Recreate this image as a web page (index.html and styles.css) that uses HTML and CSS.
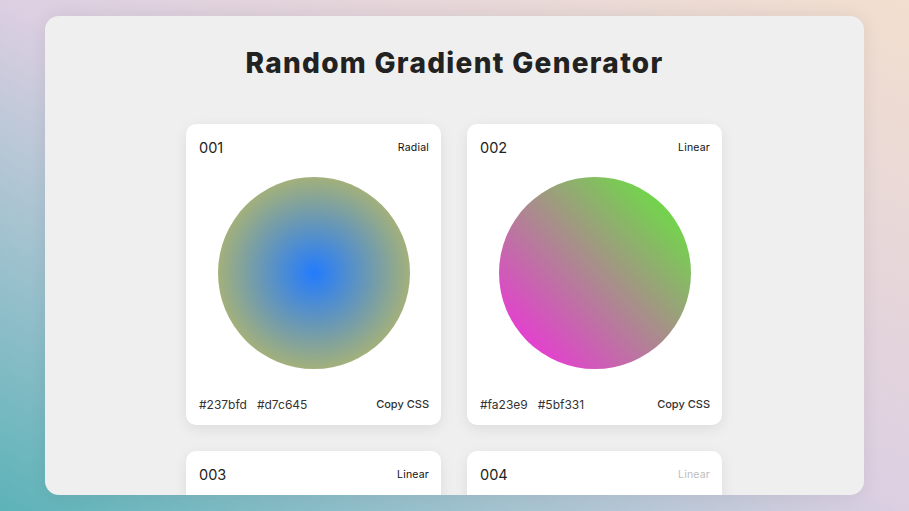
FILE: index.html
```html
<!DOCTYPE html>
<html lang="en">
<head>
<meta charset="utf-8">
<title>Random Gradient Generator</title>
<link rel="stylesheet" href="styles.css">
</head>
<body>
<main class="app">
  <h1 class="title">Random Gradient Generator</h1>
  <section class="grid">
    <article class="card">
      <header class="card-head">
        <span class="card-num">001</span>
        <span class="card-type">Radial</span>
      </header>
      <div class="swatch swatch-radial"></div>
      <footer class="card-foot">
        <span class="codes"><span>#237bfd</span><span>#d7c645</span></span>
        <span class="copy">Copy CSS</span>
      </footer>
    </article>
    <article class="card">
      <header class="card-head">
        <span class="card-num">002</span>
        <span class="card-type">Linear</span>
      </header>
      <div class="swatch swatch-linear"></div>
      <footer class="card-foot">
        <span class="codes"><span>#fa23e9</span><span>#5bf331</span></span>
        <span class="copy">Copy CSS</span>
      </footer>
    </article>
    <article class="card">
      <header class="card-head">
        <span class="card-num">003</span>
        <span class="card-type">Linear</span>
      </header>
      <div class="swatch swatch-3"></div>
      <footer class="card-foot">
        <span class="codes"><span>#3a8fd2</span><span>#e2a14b</span></span>
        <span class="copy">Copy CSS</span>
      </footer>
    </article>
    <article class="card">
      <header class="card-head">
        <span class="card-num">004</span>
        <span class="card-type card-type-faded">Linear</span>
      </header>
      <div class="swatch swatch-4"></div>
      <footer class="card-foot">
        <span class="codes"><span>#7a3ee1</span><span>#31d8a4</span></span>
        <span class="copy">Copy CSS</span>
      </footer>
    </article>
  </section>
</main>
</body>
</html>
```
FILE: styles.css
```css
* {
  box-sizing: border-box;
}

html, body {
  height: 100%;
}

body {
  margin: 0;
  padding: 16px 45px;
  font-family: "Inter", "Noto Sans", sans-serif;
  color: #222;
  background: linear-gradient(to top right, #5cb3b8 0%, #dccfe2 50%, #f2dfcf 100%);
  overflow: hidden;
}

.app {
  height: 100%;
  background: #efefef;
  border-radius: 14px;
  box-shadow: 0 0 18px rgba(0, 0, 0, 0.08);
  overflow: hidden;
  display: flex;
  flex-direction: column;
  align-items: center;
}

.title {
  margin: 29px 0 0;
  font-size: 28px;
  line-height: 36px;
  font-weight: 800;
  color: #222;
  letter-spacing: 1.3px;
}

.grid {
  margin-top: 43px;
  margin-right: 1px;
  display: grid;
  grid-template-columns: 255px 255px;
  gap: 26px;
}

.card {
  background: #fff;
  border-radius: 10px;
  padding: 13px 12px 13px 13px;
  box-shadow: 0 4px 14px rgba(0, 0, 0, 0.08);
  display: flex;
  flex-direction: column;
}

.card-head {
  height: 20px;
  display: flex;
  align-items: center;
  justify-content: space-between;
}

.card-num {
  font-size: 14.5px;
  color: #222;
}

.card-type {
  font-size: 10.5px;
  font-weight: 400;
  color: #111;
  letter-spacing: 0.2px;
}

.card-type-faded {
  color: #bdbdbd;
}

.swatch {
  width: 192px;
  height: 192px;
  border-radius: 50%;
  margin: 20px auto 27px;
  align-self: center;
}

.swatch-radial {
  background: radial-gradient(#237bfd, #d7c645);
}

.swatch-linear {
  background: linear-gradient(45deg, #fa23e9, #5bf331);
}

.swatch-3 {
  background: linear-gradient(45deg, #3a8fd2, #e2a14b);
}

.swatch-4 {
  background: linear-gradient(45deg, #7a3ee1, #31d8a4);
}

.card-foot {
  height: 16px;
  display: flex;
  align-items: center;
  justify-content: space-between;
  font-size: 12px;
}

.codes {
  display: flex;
  gap: 10px;
  color: #333;
}

.copy {
  font-size: 11px;
  font-weight: 500;
  color: #333;
}
```
